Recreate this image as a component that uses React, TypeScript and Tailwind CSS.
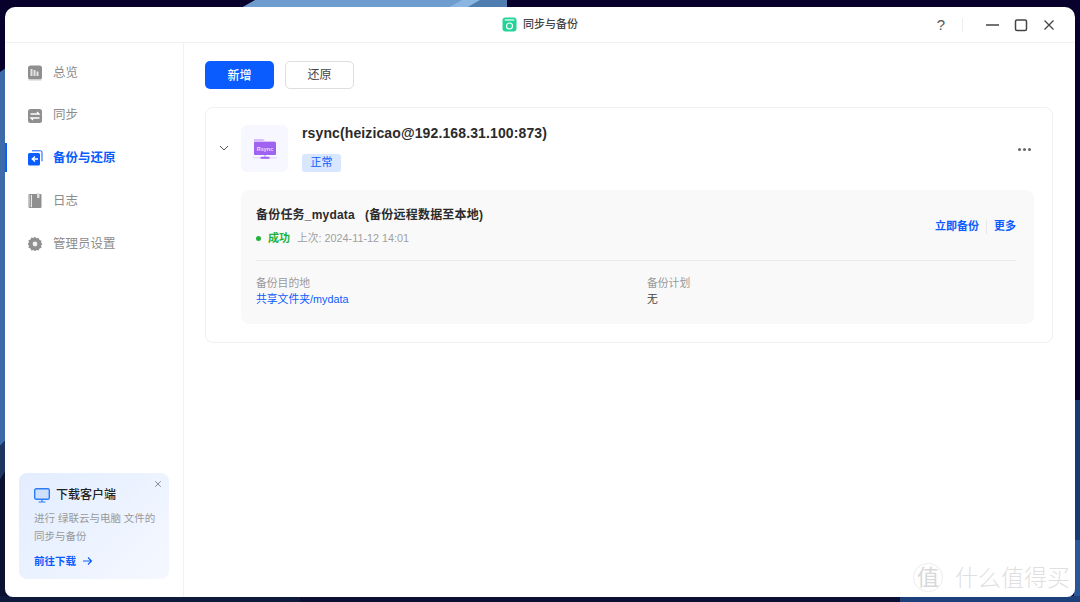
import React from "react";

function NavItem({ icon, label, active }: { icon: React.ReactNode; label: string; active?: boolean }) {
  return (
    <div className={`relative h-[42.75px] flex items-center pl-[22px] gap-[10px] text-[12.500px] ${active ? "text-[#0a5cff] font-bold" : "text-[#8c8c8c]"}`}>
      {active && <div className="absolute left-0 top-[6px] w-[2px] h-[29px] bg-[#0a5cff]" />}
      <div className="w-[16px] h-[16px] flex items-center justify-center">{icon}</div>
      <span>{label}</span>
    </div>
  );
}

const IconOverview = (
  <svg width="16" height="16" viewBox="0 0 16 16">
    <rect x="1" y="0.5" width="14" height="14" rx="2.5" fill="#8f8f8f" />
    <rect x="1.5" y="14" width="13" height="1.5" fill="#d0d0d0" />
    <path d="M4.500 4v7M7.500 5v6M10.500 6.500V11" stroke="#e4e4e4" strokeWidth="2" />
  </svg>
);
const IconSync = (
  <svg width="16" height="16" viewBox="0 0 16 16">
    <rect x="1" y="1" width="14" height="14" rx="2.500" fill="#8f8f8f" />
    <path d="M3.500 6h8.500L10 4M12.500 10H4l2 2" stroke="#fff" strokeWidth="1.300" fill="none" />
  </svg>
);
const IconBackup = (
  <svg width="16" height="16" viewBox="0 0 16 16">
    <path d="M5 0.800h8.500a1.500 1.500 0 0 1 1.500 1.500v9" stroke="#0a5cff" strokeWidth="1" fill="none" />
    <rect x="1" y="3" width="12" height="12.500" rx="1.500" fill="#0a5cff" />
    <path d="M11 9H5.500M8 6.500L5.300 9 8 11.500" stroke="#fff" strokeWidth="1.400" fill="none" />
  </svg>
);
const IconLog = (
  <svg width="16" height="16" viewBox="0 0 16 16">
    <rect x="1.500" y="1" width="13" height="14" rx="1" fill="#8f8f8f" />
    <rect x="4" y="1.800" width="1" height="12.400" fill="#e8e8e8" />
    <rect x="2.200" y="1.800" width="1" height="12.400" fill="#c4c4c4" />
    <rect x="10" y="0" width="2.500" height="5" fill="#dcdcdc" />
  </svg>
);
const IconGear = (
  <svg width="16" height="16" viewBox="0 0 16 16">
    <path
      d="M8 0.800l1.600 1.500 2.100-.4.800 2 2 .8-.4 2.100L15.400 8l-1.300 1.600.4 2.100-2 .8-.8 2-2.100-.4L8 15.200l-1.600-1.100-2.100.4-.8-2-2-.8.4-2.100L.6 8l1.300-1.600-.4-2.100 2-.8.8-2 2.100.4z"
      fill="#8f8f8f"
    />
    <circle cx="8" cy="8" r="2.400" fill="#f0f0f0" />
  </svg>
);

function Wallpaper() {
  return (
    <svg className="absolute inset-0" width="1080" height="602" viewBox="0 0 1080 602">
      <rect width="1080" height="602" fill="#07012c" />
      <path d="M241 8L255 0H507V8z" fill="#6f9ccf" />
      <path d="M448 8L462 0H507V8z" fill="#8cb6e2" />
      <path d="M466 8L480 0H507V8z" fill="#4f7db0" />
      <path d="M0 72L6 68V440L0 446z" fill="#3d6aa8" />
      <path d="M0 446L6 440V470L0 480z" fill="#1d3560" />
      <path d="M0 480L6 470V602H0z" fill="#0a1230" />
      <path d="M1074 400H1080V602H1074z" fill="#173a74" />
      <path d="M1074 540H1080V602H1074z" fill="#2a5597" />
      <path d="M0 596H300V602H0z" fill="#0d1a3c" />
      <path d="M300 596H900V602H300z" fill="#0a0f33" />
      <path d="M900 596H1080V602H900z" fill="#1d3f7a" />
    </svg>
  );
}

export default function App() {
  return (
    <div
      className="relative w-[1080px] h-[602px] overflow-hidden pt-[7px] pl-[5px] pr-[5px] pb-[5px]"
      style={{ fontFamily: '"Liberation Sans", "Noto Sans CJK SC", sans-serif' }}
    >
      <Wallpaper />
      <div className="relative w-[1070px] h-[590px] bg-white rounded-tl-[10px] rounded-tr-[10px] rounded-bl-[8px] rounded-br-[8px] flex flex-col overflow-hidden">
        {/* Title bar */}
        <div className="relative h-[36px] shrink-0 border-b border-[#f0f0f0] flex items-center justify-center">
          <div className="flex items-center gap-[6px] text-[11px] font-medium text-[#444]">
            <svg width="15" height="15" viewBox="0 0 15 15">
              <rect x="0.500" y="0.500" width="14" height="14" rx="3" fill="#25d39a" />
              <rect x="2.500" y="2" width="10" height="2" rx="1" fill="#9df0d2" />
              <circle cx="7.500" cy="9" r="3" fill="none" stroke="#ffffff" strokeWidth="1.200" />
            </svg>
            <span>同步与备份</span>
          </div>
          <div className="absolute right-[21px] top-[9px] flex items-center">
            <span className="text-[15px] leading-[18px] text-[#555] w-[18px] text-center">?</span>
            <div className="w-px h-[14px] bg-[#eeeeee] ml-[12px] mr-[23px]" />
            <svg width="68" height="16" viewBox="0 0 68 16">
              <path d="M0 8h13" stroke="#444" strokeWidth="1.600" />
              <rect x="29.500" y="3" width="11" height="10.500" rx="1.500" fill="none" stroke="#444" strokeWidth="1.500" />
              <path d="M58.500 3.500l9 9M67.500 3.500l-9 9" stroke="#444" strokeWidth="1.300" />
            </svg>
          </div>
        </div>

        <div className="flex flex-1 min-h-0">
          {/* Sidebar */}
          <aside className="relative w-[179px] shrink-0 border-r border-[#f2f2f2] pt-[8.500px] flex flex-col">
            <NavItem icon={IconOverview} label="总览" />
            <NavItem icon={IconSync} label="同步" />
            <NavItem icon={IconBackup} label="备份与还原" active />
            <NavItem icon={IconLog} label="日志" />
            <NavItem icon={IconGear} label="管理员设置" />

            <div className="relative mt-auto mb-[18px] ml-[14px] w-[150px] h-[106px] rounded-[8px] bg-[linear-gradient(135deg,#e2edff,#f5f8ff)] pl-[15px] pt-[13px]">
              <svg className="absolute right-[7px] top-[7px]" width="8" height="8" viewBox="0 0 8 8">
                <path d="M1.200 1.200l5.600 5.600M6.800 1.200L1.200 6.800" stroke="#8a8f99" strokeWidth="1" />
              </svg>
              <div className="flex items-center gap-[6px] text-[12px] leading-[18px] font-medium text-[#222]">
                <svg width="16" height="15" viewBox="0 0 16 15">
                  <rect x="0.700" y="0.700" width="14.600" height="10.600" rx="1.600" fill="#cfe0ff" stroke="#2b7cf6" strokeWidth="1.400" />
                  <path d="M8 11.500v2M4.500 14h7" stroke="#2b7cf6" strokeWidth="1.200" />
                </svg>
                <span>下载客户端</span>
              </div>
              <div className="mt-[5px] text-[10.500px] leading-[18px] text-[#999] w-[130px] whitespace-nowrap">
                进行 绿联云与电脑 文件的<br />同步与备份
              </div>
              <div className="mt-[7px] flex items-center gap-[6px] text-[10.500px] leading-[18px] font-bold text-[#0a5cff]">
                <span>前往下载</span>
                <svg width="11" height="10" viewBox="0 0 11 10">
                  <path d="M1 5h8.500M6 1.500L9.500 5 6 8.500" stroke="#0a5cff" strokeWidth="1.100" fill="none" />
                </svg>
              </div>
            </div>
          </aside>

          {/* Main */}
          <main className="flex-1 pl-[21px] pr-[22px] pt-[18px]">
            <div className="flex gap-[11px]">
              <button className="w-[69px] h-[28px] pt-px rounded-[5px] bg-[#0a5cff] text-white text-[12px] font-medium">新增</button>
              <button className="w-[69px] h-[28px] rounded-[5px] border border-[#dedede] text-[#444] text-[12px]">还原</button>
            </div>

            <section className="mt-[18px] h-[236px] rounded-[8px] border border-[#f0f0f0] relative">
              <div className="flex items-start pt-[17px]">
                <svg className="ml-[13px] mt-[20px]" width="10" height="6" viewBox="0 0 10 6">
                  <path d="M1 1l4 4 4-4" stroke="#555" strokeWidth="1" fill="none" />
                </svg>
                <div className="ml-[12px] w-[47px] h-[47px] rounded-[6px] bg-[#f6f7ff] flex items-center justify-center">
                  <svg width="24" height="24" viewBox="0 0 24 24">
                    <path d="M1 2h9l2 2h10v3H1z" fill="#d9bdf8" />
                    <rect x="1" y="5" width="22" height="13" rx="1" fill="#a062f0" />
                    <path d="M12 18v2" stroke="#b58af0" strokeWidth="1" />
                    <rect x="7.500" y="19.800" width="9" height="2" fill="#a062f0" />
                    <path d="M0 20.800h7M17 20.800h7" stroke="#dcc8f7" strokeWidth="0.800" />
                    <text x="12" y="14" fontSize="5.500" fill="#eadcff" textAnchor="middle" fontWeight="700">Rsync</text>
                  </svg>
                </div>
                <div className="ml-[14px] flex-1">
                  <div className="text-[14px] leading-[17px] font-bold tracking-[0.12px] text-[#2b2b2b]">
                    rsync(heizicao@192.168.31.100:873)
                  </div>
                  <div className="mt-[12px] w-[39px] h-[18px] rounded-[3px] bg-[#d8e6ff] text-[#0a5cff] text-[11px] leading-[16px] text-center">正常</div>
                </div>
                <div className="mr-[21px] mt-[23px] flex gap-[2px]">
                  <div className="w-[3px] h-[3px] rounded-full bg-[#666]" />
                  <div className="w-[3px] h-[3px] rounded-full bg-[#666]" />
                  <div className="w-[3px] h-[3px] rounded-full bg-[#666]" />
                </div>
              </div>

              <div className="absolute left-[35px] right-[18px] top-[82px] h-[134px] rounded-[8px] bg-[#f9f9f9] pl-[15px] pr-[18px] pt-[16px]">
                <div className="flex justify-between">
                  <div>
                    <div className="text-[12px] leading-[18px] font-bold tracking-[0.2px] text-[#2b2b2b] whitespace-pre">
                      备份任务_mydata  <span className="ml-[3px]">(备份远程数据至本地)</span>
                    </div>
                    <div className="mt-[6px] flex items-center text-[11px] leading-[16px]">
                      <span className="w-[5px] h-[5px] rounded-full bg-[#22b33a]" />
                      <span className="ml-[7px] font-bold text-[#22b33a]">成功</span>
                      <span className="ml-[7px] text-[10.800px] text-[#a0a0a0]">上次: 2024-11-12 14:01</span>
                    </div>
                  </div>
                  <div className="flex items-center h-[15px] mt-[13px] text-[11px] font-bold text-[#0a5cff] leading-[15px]">
                    <span>立即备份</span>
                    <div className="w-px h-[14px] bg-[#e8e8e8] mx-[7px]" />
                    <span>更多</span>
                  </div>
                </div>
                <div className="h-px bg-[#ececec] mt-[14px]" />
                <div className="grid grid-cols-[391px_1fr] mt-[14px] text-[10.800px] leading-[16px]">
                  <div>
                    <div className="text-[#999]">备份目的地</div>
                    <div className="text-[#0a5cff]">共享文件夹/mydata</div>
                  </div>
                  <div>
                    <div className="text-[#999]">备份计划</div>
                    <div className="text-[#444]">无</div>
                  </div>
                </div>
              </div>
            </section>
          </main>
        </div>
      </div>

      {/* watermark */}
      <div className="absolute left-[913px] top-[563px] flex items-center gap-[12px] text-[#dfdfdf]">
        <div className="w-[30px] h-[29px] rounded-full border border-[#ececec] flex items-center justify-center text-[22px] leading-none text-[#d8d8d8]">值</div>
        <span className="text-[23px] leading-[28px] font-light">什么值得买</span>
      </div>
    </div>
  );
}
